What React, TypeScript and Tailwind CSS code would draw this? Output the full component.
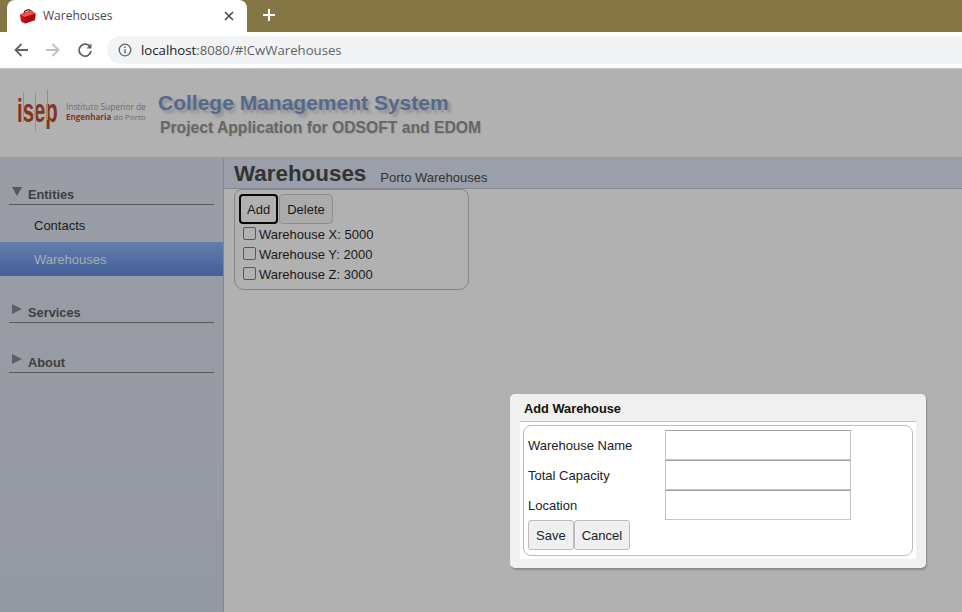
const FONT_PAGE = "font-['Liberation_Sans',Arial,sans-serif]"

function BrowserChrome() {
  return (
    <div className="font-['Open_Sans','Noto_Sans',sans-serif]">
      <div className="flex h-8 items-end bg-[#857645]">
        <div className="relative ml-[7px] flex h-[32px] w-[240px] items-center rounded-t-[8px] bg-white pl-[12px] pr-[12px]">
          <svg width="18" height="16" viewBox="0 0 18 16" className="shrink-0">
            <path d="M1 6.500L12 2l4.500 3.500-.5 6.500-10 3.500-4-2z" fill="#c9121a" />
            <path d="M1 6.500L12 2l4.500 3.500L6 9z" fill="#f2504e" />
            <path d="M6 9l10.500-3.500-.5 6.500-10 3.500z" fill="#a50d14" />
            <path d="M5 5l1-2 4-1.500 1 1.500" fill="none" stroke="#6a0c0c" strokeWidth="1.200" />
          </svg>
          <span className="ml-[6px] flex-1 text-[12px] text-[#45494e]">Warehouses</span>
          <svg width="10" height="10" viewBox="0 0 10 10" className="mr-[1px]">
            <path d="M1 1l8 8M9 1l-8 8" stroke="#45494e" strokeWidth="1.600" />
          </svg>
        </div>
        <svg width="12" height="12" viewBox="0 0 12 12" className="mb-[11px] ml-[16px]">
          <path d="M6 0v12M0 6h12" stroke="#ffffff" strokeWidth="2" />
        </svg>
      </div>
      <div className="flex h-[37px] items-center border-b border-[#c4c4c4] bg-white pl-[13px]">
        <svg width="16" height="16" viewBox="0 0 16 16">
          <path d="M15 8H2.500M8.500 2l-6 6 6 6" fill="none" stroke="#5f6368" strokeWidth="1.800" />
        </svg>
        <svg width="16" height="16" viewBox="0 0 16 16" className="ml-[16px]">
          <path d="M1 8h12.500M7.500 2l6 6-6 6" fill="none" stroke="#bdc0c4" strokeWidth="1.800" />
        </svg>
        <svg width="16" height="16" viewBox="0 0 16 16" className="ml-[16px]">
          <path d="M13.300 5.200A6 6 0 1 0 14 9" fill="none" stroke="#5f6368" strokeWidth="1.800" />
          <path d="M14.500 1.500v5h-5z" fill="#5f6368" />
        </svg>
        <div className="ml-[14px] flex h-[28px] flex-1 items-center rounded-l-full bg-[#f1f3f4] pl-[11px]">
          <svg width="14" height="14" viewBox="0 0 14 14">
            <circle cx="7" cy="7" r="5.800" fill="none" stroke="#5f6368" strokeWidth="1.300" />
            <path d="M7 6.200v4M7 3.600v1.500" stroke="#5f6368" strokeWidth="1.400" />
          </svg>
          <span className="ml-[9px] pt-[1px] text-[13.200px] text-[#202124]">
            localhost<span className="text-[#5f6368]">:8080/#!CwWarehouses</span>
          </span>
        </div>
      </div>
    </div>
  )
}

function Logo() {
  return (
    <div className="flex items-center">
      <div className="relative h-[40px] w-[41px]">
        <span className="absolute left-0 top-[-5px] origin-left scale-x-[0.6] text-[34px] font-bold leading-[40px] text-[#81341f]">
          isep
        </span>
        <div className="absolute left-[6px] top-[-3px] h-[30px] w-px bg-[#8f8f8f]" />
        <div className="absolute left-[18px] top-[-2px] h-[38px] w-px bg-[#8f8f8f]" />
        <div className="absolute left-[30px] top-[-5px] h-[30px] w-px bg-[#8f8f8f]" />
      </div>
      <div className="ml-[8px] mt-[-6px] whitespace-nowrap font-['Open_Sans',sans-serif] text-[8.300px] leading-[10px] text-[#6b6b6b]">
        <div>Instituto Superior de</div>
        <div className="text-[8px]">
          <span className="font-bold text-[#81341f]">Engenharia</span> do Porto
        </div>
      </div>
    </div>
  )
}

function Header() {
  return (
    <div className="flex h-[89px] border-b border-[#999999] bg-[#b1b1b1] pl-[17px]">
      <div className="mt-[26px] w-[141px]">
        <Logo />
      </div>
      <div className="pt-[21px]">
        <div className="text-[21px] font-bold leading-[26px] text-[#54698c] [text-shadow:3px_3px_3px_#8c8c8c]">
          College Management System
        </div>
        <div className="ml-[2px] mt-[1px] text-[15.700px] font-bold leading-[22px] text-[#666666] [text-shadow:1px_1px_1px_#a0a0a0]">
          Project Application for ODSOFT and EDOM
        </div>
      </div>
    </div>
  )
}

function SectionHeader({ label, open, className }: { label: string; open?: boolean; className: string }) {
  return (
    <div className={`mx-[9px] flex h-[20px] items-start border-b border-[#55585f] pl-[3px] ${className}`}>
      <svg width="10" height="10" viewBox="0 0 10 10" className="mt-[1px]">
        {open ? <path d="M0 1h10L5 10z" fill="#55585f" /> : <path d="M0 0l10 5-10 5z" fill="#5d6068" />}
      </svg>
      <span className="ml-[6px] mt-[2px] text-[12.800px] font-bold leading-[16px] text-[#3f3f3f]">{label}</span>
    </div>
  )
}

function Sidebar() {
  return (
    <div className="w-[224px] shrink-0 border-r border-[#84878e] bg-gradient-to-b from-[#9a9da6] to-[#9599a2] pt-[27px]">
      <SectionHeader label="Entities" open className="" />
      <div className="flex h-[37px] items-center pl-[34px] pt-[5px] text-[13px] text-[#1c1c1c]">Contacts</div>
      <div className="flex h-[34px] items-center bg-gradient-to-b from-[#627fae] to-[#435f98] pl-[34px] pt-[1px] text-[13px] text-[#a9adb3]">
        Warehouses
      </div>
      <SectionHeader label="Services" className="mt-[27px]" />
      <SectionHeader label="About" className="mt-[30px]" />
    </div>
  )
}

function ActionButton({ label, focused }: { label: string; focused?: boolean }) {
  return (
    <button
      className={`h-[30px] rounded-[4px] pt-[1px] text-[13px] text-[#1a1a1a] ${
        focused ? 'border-2 border-[#0a0a0a] px-[6px]' : 'border border-[#8f8f8f] bg-[#ababab] px-[7px]'
      }`}
    >
      {label}
    </button>
  )
}

function WarehouseList() {
  const rows = ['Warehouse X: 5000', 'Warehouse Y: 2000', 'Warehouse Z: 3000']
  return (
    <div className="ml-[10px] h-[101px] w-[235px] rounded-b-[10px] rounded-t-[8px] border border-[#868686] pl-[4px] pt-[4px]">
      <div className="flex gap-px">
        <ActionButton label="Add" focused />
        <ActionButton label="Delete" />
      </div>
      <div className="ml-[4px] mt-[1px]">
        {rows.map((row) => (
          <div key={row} className="flex h-[20px] items-center">
            <span className="mb-[3px] h-[13px] w-[13px] rounded-[2px] border border-[#585858]" />
            <span className="ml-[3px] text-[13px] text-[#1a1a1a]">{row}</span>
          </div>
        ))}
      </div>
    </div>
  )
}

function AddWarehouseDialog() {
  const fields = ['Warehouse Name', 'Total Capacity', 'Location']
  return (
    <div className="absolute left-[510px] top-[394px] w-[416px] rounded-[5px] bg-[#f0f0f0] px-[10px] pb-[9px] shadow-[1px_2px_2px_#8a8a8a]">
      <div className="flex h-[28px] items-center border-b border-[#c4c4c4] pl-[4px] pt-[2px] text-[12.800px] font-bold text-[#111111]">
        Add Warehouse
      </div>
      <div className="h-[137px] bg-white p-[3px]">
        <div className="h-[131px] rounded-[8px] border border-[#bdbdbd] pl-[4px] pt-[4px]">
          {fields.map((field) => (
            <div key={field} className="flex h-[30px] items-center">
              <span className="w-[137px] pt-[1px] text-[13px] text-[#222222]">{field}</span>
              <input className="h-[30px] w-[186px] border border-[#c4c4c4] border-t-[#a3a3a3] bg-white" />
            </div>
          ))}
          <div className="flex">
            <button className="h-[30px] rounded-[3px] border border-[#bdbdbd] bg-[#f0f0f0] px-[7px] pt-[1px] text-[13px] text-[#222222]">
              Save
            </button>
            <button className="h-[30px] rounded-[3px] border border-[#bdbdbd] bg-[#f0f0f0] px-[7px] pt-[1px] text-[13px] text-[#222222]">
              Cancel
            </button>
          </div>
        </div>
      </div>
    </div>
  )
}

export default function App() {
  return (
    <div className={`relative flex h-[612px] w-[962px] flex-col overflow-hidden bg-[#b1b1b1] ${FONT_PAGE}`}>
      <BrowserChrome />
      <Header />
      <div className="flex flex-1">
        <Sidebar />
        <div className="flex-1">
          <div className="flex h-[31px] items-end border-b border-[#85888f] bg-[#9b9fa9] pl-[10px]">
            <span className="pt-[2px] text-[22.400px] font-bold leading-[29px] text-[#333333]">Warehouses</span>
            <span className="mb-[2px] ml-[14px] text-[13px] leading-[16px] text-[#333333]">Porto Warehouses</span>
          </div>
          <WarehouseList />
        </div>
      </div>
      <AddWarehouseDialog />
    </div>
  )
}
